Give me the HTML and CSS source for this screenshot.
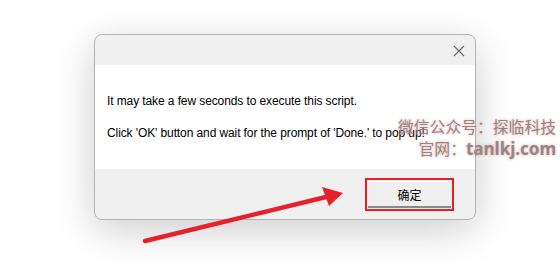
FILE: index.html
```html
<!DOCTYPE html>
<html lang="en">
<head>
    <meta charset="UTF-8">
    <title>Script</title>
    <link rel="stylesheet" href="styles.css">
</head>
<body>
    <div class="page">
        <div class="dialog">
            <div class="titlebar">
                <span class="close">
                    <svg width="12" height="12" viewBox="0 0 12 12">
                        <path d="M1 1 L11 11 M11 1 L1 11" stroke="#6a6a6a" stroke-width="1.1" fill="none"/>
                    </svg>
                </span>
            </div>
            <div class="content">
                <p>It may take a few seconds to execute this script.</p>
                <p>Click 'OK' button and wait for the prompt of 'Done.' to pop up!</p>
            </div>
            <div class="footer">
                <button class="ok">确定</button>
            </div>
        </div>
    </div>

    <div class="watermark">
        <div>微信公众号：探临科技</div>
        <div class="site">官网：<b>tanlkj.com</b></div>
    </div>

    <svg class="arrow" width="560" height="269" viewBox="0 0 560 269">
        <line x1="145" y1="241" x2="330" y2="196" stroke="#e8202a" stroke-width="4.5" stroke-linecap="round"/>
        <polygon points="343,193 322,187 329,206" fill="#e8202a"/>
    </svg>
</body>
</html>
```

FILE: styles.css
```css
body {
    margin: 0;
    background: #ffffff;
    font-family: "Liberation Sans", "Noto Sans CJK SC", sans-serif;
    width: 560px;
    height: 269px;
    overflow: hidden;
    position: relative;
}
.page {
    padding: 34px 0 0 94px;
}
.dialog {
    width: 380px;
    border: 1px solid #b4b4b4;
    border-radius: 8px;
    overflow: hidden;
    background: #f0f0f0;
    box-shadow: 0 10px 40px rgba(0, 0, 0, 0.2);
}
.titlebar {
    height: 30px;
    display: flex;
    justify-content: flex-end;
    align-items: center;
    padding-right: 10px;
}
.close {
    display: flex;
    margin-top: 2px;
}
.content {
    background: #ffffff;
    height: 104px;
    padding: 0 12px;
    box-sizing: border-box;
    padding-top: 28px;
    font-size: 12px;
    letter-spacing: -0.1px;
    color: #000;
}
.content p {
    margin: 0 0 16px;
    line-height: 16px;
}
.footer {
    height: 50px;
    display: flex;
    justify-content: flex-end;
    align-items: flex-start;
    padding: 12px 24px 0 0;
    box-sizing: border-box;
}
.ok {
    width: 83px;
    height: 27px;
    background: #efefef;
    border: none;
    border-top: 1px solid #ffffff;
    border-bottom: 2px solid #8a8a8a;
    font-family: "Noto Sans CJK SC", sans-serif;
    font-size: 12px;
    color: #000;
    padding: 0;
    outline: 2px solid #e61e28;
    outline-offset: 1px;
}
.watermark {
    position: absolute;
    right: 4px;
    top: 116px;
    font-family: "Noto Sans CJK SC", sans-serif;
    font-size: 15.8px;
    line-height: 22px;
    color: #8a8a8a;
    text-shadow: 0 0 3px rgba(255, 90, 90, 0.6);
    text-align: right;
    white-space: nowrap;
}
.watermark .site b {
    font-family: "Noto Sans", "Liberation Sans", sans-serif;
    font-size: 17px;
}
.arrow {
    position: absolute;
    left: 0;
    top: 0;
}
```
